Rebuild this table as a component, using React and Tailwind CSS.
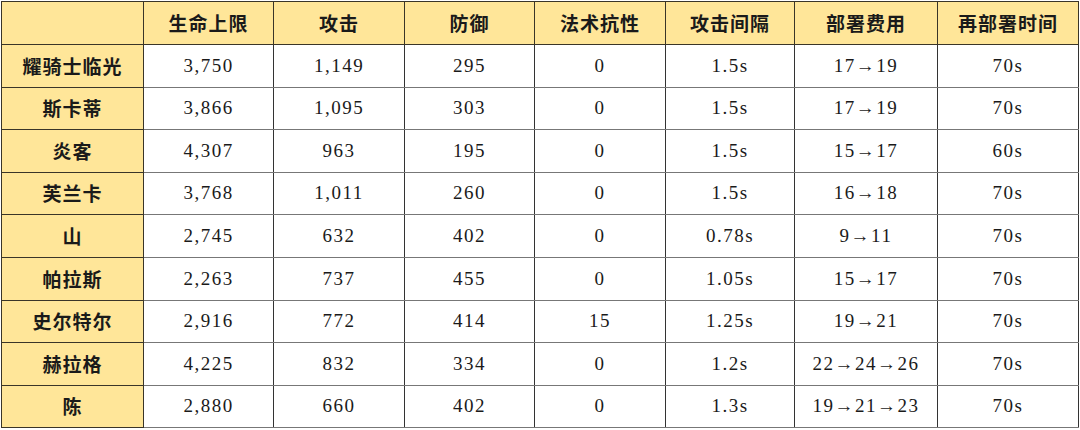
const headers = ['生命上限', '攻击', '防御', '法术抗性', '攻击间隔', '部署费用', '再部署时间'];

const rows = [
  ['耀骑士临光', '3,750', '1,149', '295', '0', '1.5s', '17→19', '70s'],
  ['斯卡蒂', '3,866', '1,095', '303', '0', '1.5s', '17→19', '70s'],
  ['炎客', '4,307', '963', '195', '0', '1.5s', '15→17', '60s'],
  ['芙兰卡', '3,768', '1,011', '260', '0', '1.5s', '16→18', '70s'],
  ['山', '2,745', '632', '402', '0', '0.78s', '9→11', '70s'],
  ['帕拉斯', '2,263', '737', '455', '0', '1.05s', '15→17', '70s'],
  ['史尔特尔', '2,916', '772', '414', '15', '1.25s', '19→21', '70s'],
  ['赫拉格', '4,225', '832', '334', '0', '1.2s', '22→24→26', '70s'],
  ['陈', '2,880', '660', '402', '0', '1.3s', '19→21→23', '70s'],
];

const widths = [142, 130, 131, 130, 131, 129, 143, 141];

const cjk = { fontFamily: '"Noto Sans CJK SC", sans-serif' };
const num = { fontFamily: '"Liberation Serif", "Noto Sans CJK SC", serif' };

export default function App() {
  return (
    <div className="w-[1080px] h-[430px] bg-white overflow-hidden pl-px pt-px">
      <table className="table-fixed border-collapse text-[#1a1a1a]">
        <colgroup>
          {widths.map((w, i) => (
            <col key={i} style={{ width: w }} />
          ))}
        </colgroup>
        <thead>
          <tr className="h-[43px] bg-[#ffe699]">
            <th className="border border-[#3a3528]"></th>
            {headers.map((h) => (
              <th key={h} style={cjk} className="border border-[#3a3528] text-[19px] font-bold tracking-[1px] text-center">
                {h}
              </th>
            ))}
          </tr>
        </thead>
        <tbody>
          {rows.map((r) => (
            <tr key={r[0]} className="h-[42.6px]">
              <td style={cjk} className="border border-[#3a3528] bg-[#ffe699] text-[19px] font-bold tracking-[1px] text-center">
                {r[0]}
              </td>
              {r.slice(1).map((c, i) => (
                <td key={i} style={num} className="border-x border-x-[#333] border-y border-y-[#777] text-[19px] tracking-[1.5px] text-center">
                  {c}
                </td>
              ))}
            </tr>
          ))}
        </tbody>
      </table>
    </div>
  );
}
